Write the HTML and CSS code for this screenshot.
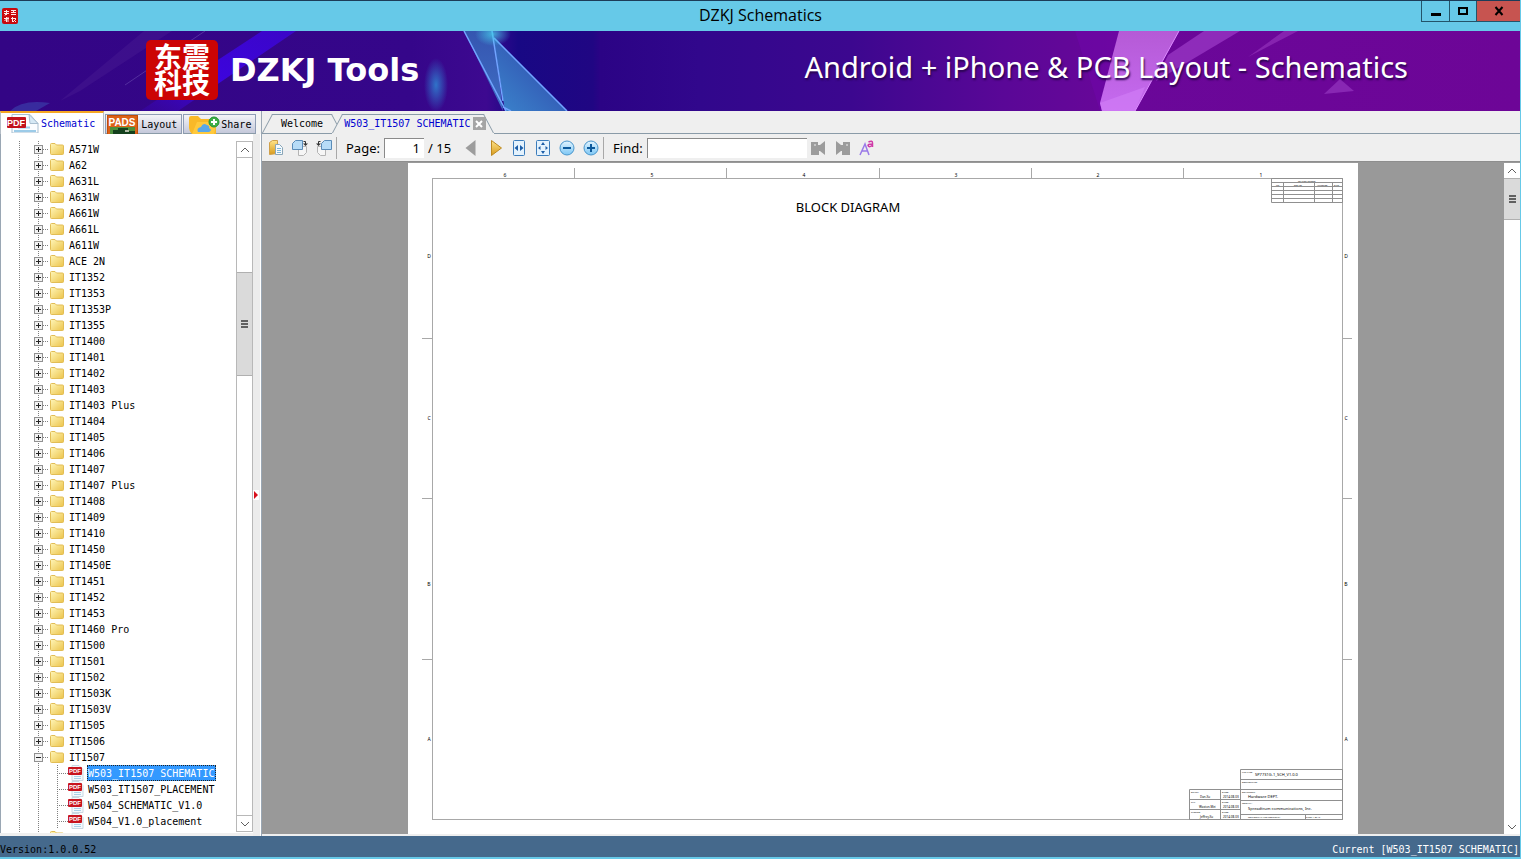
FILE: index.html
```
<!DOCTYPE html>
<html lang="en">
  <head>
    <meta charset="UTF-8" />
    <meta name="viewport" content="width=device-width, initial-scale=1.0" />
    <title>DZKJ Schematics</title>
    <link rel="stylesheet" href="styles.css">
  </head>
  <body>
    <!-- shared icons -->
    <svg class="sprite" width="0" height="0">
      <defs>
        <linearGradient id="gFolder" x1="0" y1="0" x2="1" y2="1">
          <stop offset="0" stop-color="#fff6b8" />
          <stop offset="1" stop-color="#ecc44c" />
        </linearGradient>
        <linearGradient id="gGold" x1="0" y1="0" x2="0" y2="1">
          <stop offset="0" stop-color="#ffe48a" />
          <stop offset="1" stop-color="#d79a1c" />
        </linearGradient>
        <linearGradient id="gBlue" x1="0" y1="0" x2="0" y2="1">
          <stop offset="0" stop-color="#e2f4ff" />
          <stop offset="1" stop-color="#7cc6f4" />
        </linearGradient>
      </defs>
      <symbol id="folder" viewBox="0 0 14 12">
        <path d="M.5 1.500Q.5.5 1.500.5h3.500l1.500 1.500h6q1 0 1 1v7.500q0 1-1 1h-11q-1 0-1-1z" fill="url(#gFolder)" stroke="#e2bd55" />
      </symbol>
      <symbol id="pdf" viewBox="0 0 16 16">
        <path d="M4 .5h7l4 4v11H4z" fill="#f4f9fd" stroke="#c9d8e2" />
        <path d="M6 11.500h7M6 13.500h7" stroke="#a9d2e8" />
        <rect x="0" y="2" width="14" height="8" rx="1" fill="#c8141e" />
        <text class="badge" x="7" y="8" font-size="6">PDF</text>
      </symbol>
    </svg>

    <header class="titlebar">
      <svg class="app-icon" viewBox="0 0 16 16">
        <rect width="16" height="16" rx="2" fill="#c80a0f" />
        <path d="M2 3.500h5M4.500 2v5M2 5.500h5M3 7.500l1-2M9 2.500h5M9 4.500h5M11.500 2v3M9 6.500h5M2 10.500h5M4.500 9v5M2.500 13l2-2M6 9v5M9 10.500h5M10.500 9v5M12 12l2 2M14 11l-3 3" stroke="#ffe9e9" fill="none" />
      </svg>
      <h1 class="window-title">DZKJ Schematics</h1>
      <div class="window-buttons">
        <button class="win-btn minimize" aria-label="Minimize">
          <svg width="12" height="12"><path d="M1 8h10v3H1z" /></svg>
        </button>
        <button class="win-btn maximize" aria-label="Maximize">
          <svg width="12" height="12"><path d="M2 3h8v6H2z" fill="none" stroke="#000" stroke-width="2" /></svg>
        </button>
        <button class="win-btn close" aria-label="Close">
          <svg width="12" height="12"><path d="M2.500 2l7 8M9.500 2l-7 8" stroke="#000" stroke-width="2" /></svg>
        </button>
      </div>
    </header>

    <section class="banner">
      <svg class="banner-art" viewBox="0 0 1520 80" preserveAspectRatio="none">
        <defs>
          <linearGradient id="gBanner">
            <stop offset="0" stop-color="#330585" />
            <stop offset=".27" stop-color="#35068a" />
            <stop offset=".32" stop-color="#3d0990" />
            <stop offset=".341" stop-color="#180884" />
            <stop offset=".39" stop-color="#200683" />
            <stop offset=".395" stop-color="#2b0385" />
            <stop offset=".46" stop-color="#31078c" />
            <stop offset=".56" stop-color="#3c078f" />
            <stop offset=".66" stop-color="#5a0797" />
            <stop offset=".74" stop-color="#6a0799" />
            <stop offset="1" stop-color="#6d0597" />
          </linearGradient>
          <linearGradient id="gBeam" x1="1" y1="0" x2="0" y2="1">
            <stop offset="0" stop-color="#3c06d2" />
            <stop offset=".6" stop-color="#3e04ee" />
            <stop offset="1" stop-color="#3c06c0" stop-opacity=".3" />
          </linearGradient>
          <linearGradient id="gShard" x1="0" y1="0" x2="0" y2="1">
            <stop offset="0" stop-color="#3555b0" />
            <stop offset="1" stop-color="#3f6fc4" />
          </linearGradient>
          <linearGradient id="gShard2" x1="1" y1="0" x2="0" y2="1">
            <stop offset="0" stop-color="#2e3fa6" />
            <stop offset="1" stop-color="#3b86cd" />
          </linearGradient>
          <linearGradient id="gPink" x1="0" y1="0" x2="0" y2="1">
            <stop offset="0" stop-color="#b55ad6" />
            <stop offset="1" stop-color="#c66bf0" />
          </linearGradient>
          <radialGradient id="gGlow">
            <stop offset="0" stop-color="#2f7fd0" stop-opacity=".9" />
            <stop offset="1" stop-color="#2f7fd0" stop-opacity="0" />
          </radialGradient>
          <radialGradient id="gSpark">
            <stop offset="0" stop-color="#45cbea" stop-opacity=".8" />
            <stop offset="1" stop-color="#45cbea" stop-opacity="0" />
          </radialGradient>
        </defs>
        <rect width="1520" height="80" fill="url(#gBanner)" />
        <path d="M144 0h28L80 60 60 70z" fill="#4a1f93" opacity=".4" />
        <path d="M205 0L125 54" stroke="#6a4bb0" opacity=".6" />
        <path d="M262 0h34L178 80h-38z" fill="url(#gBeam)" opacity=".85" />
        <path d="M10 80Q22 68 50 72L36 80z" fill="#4064c4" opacity=".4" />
        <ellipse cx="436" cy="54" rx="12" ry="27" fill="url(#gGlow)" />
        <path d="M464 0h29l10 80z" fill="url(#gShard)" />
        <path d="M493 5l74 75h-62z" fill="url(#gShard2)" />
        <path d="M464 0l42 80M492 0l11 70M494 7l73 73M503 76l8 4" fill="none" stroke="#71a4ff" stroke-width="1.500" />
        <ellipse cx="493" cy="3" rx="18" ry="12" fill="url(#gSpark)" />
        <path d="M1075 0h45v80h-20z" fill="#7206b0" opacity=".4" />
        <path d="M1119 0h60l-44 80h-33l-2-8z" fill="url(#gPink)" />
        <path d="M1100 72l45-16-10 24h-33z" fill="#d07cf5" opacity=".7" />
        <path d="M1179 0l-44 80" stroke="#dc8bff" />
        <path d="M1204 0h36l-84 50 12-26z" fill="#9432c0" opacity=".85" />
        <path d="M1284 0h14l-50 26z" fill="#8d2bb5" opacity=".8" />
        <path d="M1340 48l14 12-30 3z" fill="#8827b3" />
      </svg>
      <div class="brand">
        <p class="logo">东震<br />科技</p>
        <strong class="brand-name">DZKJ Tools</strong>
      </div>
      <p class="slogan">Android + iPhone &amp; PCB Layout - Schematics</p>
    </section>

    <main class="workspace">
      <aside class="sidebar">
        <nav class="side-tabs">
          <button class="side-tab active">
            <svg width="32" height="19" viewBox="0 0 32 19">
              <path d="M5 .5h18l8 9V19H5z" fill="#fbfdff" stroke="#a9bfd0" />
              <path d="M22 .5l1 9h8z" fill="#d6e9f5" stroke="#a9bfd0" />
              <path d="M11 13.500h12M7 17h22" stroke="#9ccbe8" stroke-width="2" />
              <rect x="0" y="3" width="19" height="11" rx="1" fill="#c3121c" />
              <text class="badge" x="9" y="12" font-size="9">PDF</text>
            </svg>
            Schematic
          </button>
          <button class="side-tab">
            <svg width="31" height="19" viewBox="0 0 31 19">
              <rect x=".5" y=".5" width="30" height="19" fill="#dc6118" stroke="#c14d08" />
              <path d="M3 12h25v7H3z" fill="#4d8f3b" />
              <path d="M6 19v-4h5v-2h10v3h7v3z" fill="#14401d" />
              <rect x="18" y="15" width="4" height="2" fill="#aebaa6" />
              <text class="badge" x="15" y="11" font-size="10">PADS</text>
            </svg>
            Layout
          </button>
          <button class="side-tab share">
            <svg width="32" height="19" viewBox="0 0 32 19">
              <path d="M1 3q0-2 2-2h7l3 3h13q2 0 2 2v13H4q-3-3-3-6z" fill="#f9b928" />
              <path d="M4 19L9 7h20l-3 12z" fill="#ffc93c" />
              <path d="M10 17q-2-4 3-5 2-5 6-2 3 1 2 3 4 2 0 4z" fill="#5aa7e8" />
              <circle cx="26" cy="7" r="5" fill="#3dae48" stroke="#249232" />
              <path d="M26 4v6M23 7h6" stroke="#fff" stroke-width="2" />
            </svg>
            Share
          </button>
        </nav>
        <div class="side-body">
          <div class="tree-pane">
            <ul class="tree">
              <li><button class="toggle" aria-label="Expand"></button><svg class="folder"><use href="#folder" /></svg>A571W</li>
              <li><button class="toggle" aria-label="Expand"></button><svg class="folder"><use href="#folder" /></svg>A62</li>
              <li><button class="toggle" aria-label="Expand"></button><svg class="folder"><use href="#folder" /></svg>A631L</li>
              <li><button class="toggle" aria-label="Expand"></button><svg class="folder"><use href="#folder" /></svg>A631W</li>
              <li><button class="toggle" aria-label="Expand"></button><svg class="folder"><use href="#folder" /></svg>A661W</li>
              <li><button class="toggle" aria-label="Expand"></button><svg class="folder"><use href="#folder" /></svg>A661L</li>
              <li><button class="toggle" aria-label="Expand"></button><svg class="folder"><use href="#folder" /></svg>A611W</li>
              <li><button class="toggle" aria-label="Expand"></button><svg class="folder"><use href="#folder" /></svg>ACE 2N</li>
              <li><button class="toggle" aria-label="Expand"></button><svg class="folder"><use href="#folder" /></svg>IT1352</li>
              <li><button class="toggle" aria-label="Expand"></button><svg class="folder"><use href="#folder" /></svg>IT1353</li>
              <li><button class="toggle" aria-label="Expand"></button><svg class="folder"><use href="#folder" /></svg>IT1353P</li>
              <li><button class="toggle" aria-label="Expand"></button><svg class="folder"><use href="#folder" /></svg>IT1355</li>
              <li><button class="toggle" aria-label="Expand"></button><svg class="folder"><use href="#folder" /></svg>IT1400</li>
              <li><button class="toggle" aria-label="Expand"></button><svg class="folder"><use href="#folder" /></svg>IT1401</li>
              <li><button class="toggle" aria-label="Expand"></button><svg class="folder"><use href="#folder" /></svg>IT1402</li>
              <li><button class="toggle" aria-label="Expand"></button><svg class="folder"><use href="#folder" /></svg>IT1403</li>
              <li><button class="toggle" aria-label="Expand"></button><svg class="folder"><use href="#folder" /></svg>IT1403 Plus</li>
              <li><button class="toggle" aria-label="Expand"></button><svg class="folder"><use href="#folder" /></svg>IT1404</li>
              <li><button class="toggle" aria-label="Expand"></button><svg class="folder"><use href="#folder" /></svg>IT1405</li>
              <li><button class="toggle" aria-label="Expand"></button><svg class="folder"><use href="#folder" /></svg>IT1406</li>
              <li><button class="toggle" aria-label="Expand"></button><svg class="folder"><use href="#folder" /></svg>IT1407</li>
              <li><button class="toggle" aria-label="Expand"></button><svg class="folder"><use href="#folder" /></svg>IT1407 Plus</li>
              <li><button class="toggle" aria-label="Expand"></button><svg class="folder"><use href="#folder" /></svg>IT1408</li>
              <li><button class="toggle" aria-label="Expand"></button><svg class="folder"><use href="#folder" /></svg>IT1409</li>
              <li><button class="toggle" aria-label="Expand"></button><svg class="folder"><use href="#folder" /></svg>IT1410</li>
              <li><button class="toggle" aria-label="Expand"></button><svg class="folder"><use href="#folder" /></svg>IT1450</li>
              <li><button class="toggle" aria-label="Expand"></button><svg class="folder"><use href="#folder" /></svg>IT1450E</li>
              <li><button class="toggle" aria-label="Expand"></button><svg class="folder"><use href="#folder" /></svg>IT1451</li>
              <li><button class="toggle" aria-label="Expand"></button><svg class="folder"><use href="#folder" /></svg>IT1452</li>
              <li><button class="toggle" aria-label="Expand"></button><svg class="folder"><use href="#folder" /></svg>IT1453</li>
              <li><button class="toggle" aria-label="Expand"></button><svg class="folder"><use href="#folder" /></svg>IT1460 Pro</li>
              <li><button class="toggle" aria-label="Expand"></button><svg class="folder"><use href="#folder" /></svg>IT1500</li>
              <li><button class="toggle" aria-label="Expand"></button><svg class="folder"><use href="#folder" /></svg>IT1501</li>
              <li><button class="toggle" aria-label="Expand"></button><svg class="folder"><use href="#folder" /></svg>IT1502</li>
              <li><button class="toggle" aria-label="Expand"></button><svg class="folder"><use href="#folder" /></svg>IT1503K</li>
              <li><button class="toggle" aria-label="Expand"></button><svg class="folder"><use href="#folder" /></svg>IT1503V</li>
              <li><button class="toggle" aria-label="Expand"></button><svg class="folder"><use href="#folder" /></svg>IT1505</li>
              <li><button class="toggle" aria-label="Expand"></button><svg class="folder"><use href="#folder" /></svg>IT1506</li>
              <li><button class="toggle open" aria-label="Collapse"></button><svg class="folder"><use href="#folder" /></svg>IT1507</li>
              <li class="file"><svg class="pdf"><use href="#pdf" /></svg><span class="selected">W503_IT1507 SCHEMATIC</span></li>
              <li class="file"><svg class="pdf"><use href="#pdf" /></svg><span>W503_IT1507_PLACEMENT</span></li>
              <li class="file"><svg class="pdf"><use href="#pdf" /></svg><span>W504_SCHEMATIC_V1.0</span></li>
              <li class="file"><svg class="pdf"><use href="#pdf" /></svg><span>W504_V1.0_placement</span></li>
              <li><button class="toggle" aria-label="Expand"></button><svg class="folder"><use href="#folder" /></svg></li>
            </ul>
            <div class="scrollbar side-scroll">
              <button class="scroll-btn" aria-label="Scroll up"><svg width="10" height="6"><path d="M1 5l4-4 4 4" /></svg></button>
              <div class="gap-before"></div>
              <div class="thumb"><i></i></div>
              <div class="gap-after"></div>
              <button class="scroll-btn" aria-label="Scroll down"><svg width="10" height="6"><path d="M1 1l4 4 4-4" /></svg></button>
            </div>
          </div>
          <div class="splitter">
            <svg width="6" height="10"><path d="M0 0h6v10H0z" fill="#fff" /><path d="M1 1l4 4-4 4z" fill="#d8101c" /></svg>
          </div>
        </div>
      </aside>

      <section class="viewer">
        <nav class="doc-tabs">
          <div class="doc-tab"><button class="doc-name">Welcome</button></div>
          <div class="doc-tab active">
            <button class="doc-name">W503_IT1507 SCHEMATIC</button>
            <button class="doc-close" aria-label="Close tab"><svg width="8" height="8"><path d="M1 1l6 6M7 1L1 7" stroke="#fff" stroke-width="2" /></svg></button>
          </div>
          <div class="doc-rest"></div>
        </nav>

        <div class="toolbar">
          <button class="tool" aria-label="Open">
            <svg width="16" height="16">
              <path d="M1.500 2.500l3-2h5v13l-8 1z" fill="url(#gGold)" stroke="#d0a04a" />
              <path d="M7.500 4.500h4l3 3v7h-7z" fill="#f7fafc" stroke="#8aa6b8" />
              <path d="M9 8.500h4M9 10.500h4M9 12.500h4" stroke="#7cb6d8" />
            </svg>
          </button>
          <button class="tool" aria-label="Rotate left">
            <svg width="16" height="16">
              <path d="M6.500 6.500h8v6l-3 3h-5z" fill="#f6f6f6" stroke="#b4b4b4" />
              <path d="M3.500.5h7v9H.5v-6z" fill="#b7dcf7" stroke="#5b8cb8" />
              <path d="M11.500 1.500h2V4" fill="none" stroke="#333" />
              <path d="M11 3.500h5L13.500 6z" fill="#333" />
            </svg>
          </button>
          <button class="tool" aria-label="Rotate right">
            <svg width="16" height="16">
              <path d="M1.500 6.500h8v9h-5l-3-3z" fill="#f6f6f6" stroke="#b4b4b4" />
              <path d="M8.500.5h7v9h-10v-6z" fill="#b7dcf7" stroke="#5b8cb8" />
              <path d="M4.500 1.500h-2V4" fill="none" stroke="#333" />
              <path d="M0 3.500h5L2.500 6z" fill="#333" />
            </svg>
          </button>
          <div class="separator"></div>
          <label for="page">Page:</label>
          <input id="page" class="page-input" type="text" value="1" />
          <span class="page-total">/ 15</span>
          <button class="tool" aria-label="Previous page">
            <svg width="16" height="16"><path d="M12.500 0v16L2.500 8z" fill="#9c9c9c" /></svg>
          </button>
          <button class="tool" aria-label="Next page">
            <svg width="16" height="16"><path d="M4.500.5v15l10-7.500z" fill="url(#gGold)" stroke="#bd8a22" /></svg>
          </button>
          <button class="tool" aria-label="Fit width">
            <svg width="16" height="16">
              <rect x="2.500" y=".5" width="11" height="15" rx="1" fill="#e4f2fd" stroke="#3b7cbb" />
              <path d="M7 5v6L3.500 8zM9 5v6l3.500-3z" fill="#1d5ea8" />
            </svg>
          </button>
          <button class="tool" aria-label="Fit page">
            <svg width="16" height="16">
              <rect x="1.500" y=".5" width="13" height="15" rx="1" fill="#e4f2fd" stroke="#3b7cbb" />
              <path d="M6 5h4L8 2zM6 11h4l-2 3zM5.500 6v4L3 8zM10.500 6v4L13 8z" fill="#1d5ea8" />
            </svg>
          </button>
          <button class="tool" aria-label="Zoom out">
            <svg width="16" height="16">
              <circle cx="8" cy="8" r="7" fill="url(#gBlue)" stroke="#4a96cc" />
              <path d="M4 8h8" stroke="#0d5a9c" stroke-width="2" />
            </svg>
          </button>
          <button class="tool" aria-label="Zoom in">
            <svg width="16" height="16">
              <circle cx="8" cy="8" r="7" fill="url(#gBlue)" stroke="#4a96cc" />
              <path d="M4 8h8M8 4v8" stroke="#0d5a9c" stroke-width="2" />
            </svg>
          </button>
          <div class="separator"></div>
          <label for="find">Find:</label>
          <input id="find" class="find-input" type="text" />
          <button class="tool" aria-label="Find previous">
            <svg width="16" height="16"><path d="M0 2h7v3h2l5-4v14l-5-4H8v4H0z" fill="#9c9c9c" /><path d="M4 4v2" stroke="#eee" /></svg>
          </button>
          <button class="tool" aria-label="Find next">
            <svg width="16" height="16"><path d="M15 2H8v3H6L1 1v14l5-4h1v4h8z" fill="#9c9c9c" /><path d="M12 4v2" stroke="#eee" /></svg>
          </button>
          <button class="tool" aria-label="Match case">
            <svg width="16" height="16">
              <path d="M1 15L6 4l4 11M3 11h6" fill="none" stroke="#9a7ae8" stroke-width="1.500" />
              <path d="M9.500 2q4-2 4 1v4M13 4q-4 0-4 1.500 1 2.500 4 0" fill="none" stroke="#d03aa8" stroke-width="1.500" />
            </svg>
          </button>
        </div>

        <div class="canvas">
          <svg class="sheet" viewBox="0 0 950 671" preserveAspectRatio="xMidYMin meet">
            <rect width="950" height="671" fill="#fff" />
            <g class="lines">
              <rect x="24.500" y="15.500" width="910" height="641" />
              <path d="M166.500 5v10M318.500 5v10M471.500 5v10M623.500 5v10M775.500 5v10" />
              <path d="M14 175.500h10M14 335.500h10M14 496.500h10M935 175.500h9M935 335.500h9M935 496.500h9" />
            </g>
            <g class="dark-lines">
              <path d="M863.500 15.500h71v24h-71zM863.500 19.500h71M863.500 23.500h71M863.500 27.500h71M863.500 31.500h71M863.500 35.500h71M875.500 19.500v20M906.500 19.500v20M924.500 19.500v20" />
              <path d="M832.500 606.500h102v50h-102zM832.500 616.500h102M832.500 626.500h102M832.500 637.500h102M832.500 651.500h102M897.500 651.500v5" />
              <path d="M832.500 626.500h-51v30h51M781.500 636.500h51M781.500 646.500h51M812.500 626.500v30" />
            </g>
            <g class="marks">
              <text x="97" y="14">6</text>
              <text x="244" y="14">5</text>
              <text x="396" y="14">4</text>
              <text x="548" y="14">3</text>
              <text x="690" y="14">2</text>
              <text x="853" y="14">1</text>
              <text x="21" y="95">D</text>
              <text x="21" y="257">C</text>
              <text x="21" y="423">B</text>
              <text x="21" y="578">A</text>
              <text x="938" y="95">D</text>
              <text x="938" y="257">C</text>
              <text x="938" y="423">B</text>
              <text x="938" y="578">A</text>
            </g>
            <text class="sheet-title" x="440" y="49">BLOCK DIAGRAM</text>
            <g class="tiny">
              <text x="890" y="19">REVISION RECORD</text>
              <text x="868" y="23">LTR</text>
              <text x="886" y="23">ECO NO:</text>
              <text x="909" y="23">APPROVED:</text>
              <text x="926" y="23">DATE:</text>
              <text x="834" y="610">FILE NAME:</text>
              <text x="834" y="620">DOCUMENT NO:</text>
              <text x="834" y="630">DEPARTMENT:</text>
              <text x="834" y="641">COMPANY:</text>
              <text x="840" y="655">CONFIDENTIAL AND PROPRIETARY</text>
              <text x="898" y="655">SHEET: 1 OF 15</text>
              <text x="783" y="630">DRAWN:</text>
              <text x="783" y="640">CHK:</text>
              <text x="783" y="650">CHECKED:</text>
              <text x="814" y="630">DATED:</text>
              <text x="814" y="640">DATED:</text>
              <text x="814" y="650">DATED:</text>
            </g>
            <g class="small">
              <text x="847" y="613">SP7731G-1_SCH_V1.0.0</text>
              <text x="840" y="635">Hardware DEPT.</text>
              <text x="840" y="647">Spreadtrum communications, Inc.</text>
            </g>
            <g class="signed">
              <text x="792" y="635">Dan.Xu</text>
              <text x="791" y="645">Waston.Mei</text>
              <text x="792" y="655">Jeffrey.Xu</text>
              <text x="815" y="635">2014-08-03</text>
              <text x="815" y="645">2014-08-03</text>
              <text x="815" y="655">2014-08-03</text>
            </g>
          </svg>
          <div class="scrollbar page-scroll">
            <button class="scroll-btn" aria-label="Scroll up"><svg width="10" height="6"><path d="M1 5l4-4 4 4" /></svg></button>
            <div class="thumb"><i></i></div>
            <div class="gap-after"></div>
            <button class="scroll-btn" aria-label="Scroll down"><svg width="10" height="6"><path d="M1 1l4 4 4-4" /></svg></button>
          </div>
        </div>
      </section>
    </main>

    <footer class="statusbar">
      <span>Version:1.0.0.52</span>
      <span class="current">Current [W503_IT1507 SCHEMATIC]</span>
    </footer>
  </body>
</html>
```
FILE: styles.css
```
* {
  margin: 0;
  padding: 0;
  box-sizing: border-box;
}

body {
  display: flex;
  flex-direction: column;
  height: 100vh;
  overflow: hidden;
  background: #efefef;
  border-right: 1px solid #66c9e8;
  font-family: "DejaVu Sans Mono", monospace;
  font-size: 10px;
  color: #000;
}

button {
  border: none;
  background: none;
  font: inherit;
  color: inherit;
}

svg {
  flex: none;
}

.sprite {
  position: absolute;
}

.badge {
  fill: #fff;
  font-family: "Liberation Sans", sans-serif;
  font-weight: bold;
  text-anchor: middle;
}

/* title bar */
.titlebar {
  display: grid;
  grid-template-columns: 1fr auto 1fr;
  align-items: center;
  height: 31px;
  margin-right: -1px;
  background: #66c9e8;
  border-top: 1px solid #1c3c58;
}

.app-icon {
  width: 16px;
  height: 16px;
  margin-left: 2px;
}

.window-title {
  padding-bottom: 2px;
  font-family: "Open Sans", sans-serif;
  font-size: 16px;
  font-weight: normal;
}

.window-buttons {
  display: flex;
  align-self: start;
  justify-self: end;
  height: 21px;
  border: 1px solid #23546a;
  border-width: 0 0 1px 1px;
}

.win-btn {
  display: flex;
  align-items: center;
  justify-content: center;
  width: 27px;
}

.win-btn.maximize {
  border-left: 1px solid #23546a;
}

.win-btn.close {
  width: 45px;
  background: #c75450;
  border-left: 1px solid #23546a;
}

/* banner */
.banner {
  position: relative;
  display: flex;
  align-items: center;
  justify-content: space-between;
  height: 80px;
  padding: 0 112px 2px 146px;
  color: #fff;
  font-family: "Noto Sans", sans-serif;
}

.banner-art {
  position: absolute;
  left: 0;
  top: 0;
  width: 100%;
  height: 100%;
}

.brand {
  position: relative;
  display: flex;
  align-items: center;
  gap: 12px;
}

.logo {
  width: 72px;
  height: 60px;
  padding: 3px 0;
  border-radius: 5px;
  background: #cc0404;
  font: bold 28px/26px "Noto Sans CJK SC", sans-serif;
  text-align: center;
}

.brand-name {
  font-family: "DejaVu Sans", sans-serif;
  font-size: 32px;
  line-height: 40px;
}

.slogan {
  position: relative;
  padding-bottom: 6px;
  font-size: 29px;
  line-height: 34px;
  text-shadow: 1px 2px 2px #2a0550;
}

/* workspace */
.workspace {
  flex: 1;
  display: flex;
  min-height: 0;
}

.sidebar {
  display: flex;
  flex-direction: column;
  width: 261px;
}

.side-tabs {
  display: flex;
  align-items: flex-end;
  height: 23px;
  background: #f3f3f3;
}

.side-tab {
  display: flex;
  align-items: center;
  gap: 3px;
  height: 20px;
  margin-left: 1px;
  padding: 0 4px 0 1px;
  background: linear-gradient(#f4f4f8, #c4c8da);
  border: 1px solid #8f9db5;
  border-bottom-color: #8a9ba8;
}

.side-tab.active {
  gap: 2px;
  height: 23px;
  margin-left: 0;
  padding: 0 8px 0 6px;
  background: #fff;
  border: 1px solid #b5bdc6;
  border-width: 2px 1px 0 1px;
  border-top-color: #f5a623;
  color: #0000d0;
}

.side-tab.share {
  gap: 1px;
  padding-left: 4px;
}

.side-body {
  flex: 1;
  display: flex;
  min-height: 0;
}

.tree-pane {
  flex: 1;
  display: flex;
  min-width: 0;
  margin-bottom: 3px;
  padding-top: 7px;
  background: #fff;
  border-left: 1px solid #9aa7b4;
}

.tree {
  flex: 1;
  overflow: hidden;
  padding-left: 33px;
  list-style: none;
  /* dotted guides of the two upper levels */
  background:
    repeating-linear-gradient(#808080 0 1px, transparent 1px 2px) 18px 0 / 1px 100% no-repeat,
    repeating-linear-gradient(#808080 0 1px, transparent 1px 2px) 37px 0 / 1px 100% no-repeat;
}

.tree li {
  display: flex;
  align-items: center;
  height: 16px;
  white-space: nowrap;
}

.toggle {
  width: 9px;
  height: 9px;
  border: 1px solid #919191;
  background:
    linear-gradient(#222, #222) center / 5px 1px no-repeat,
    linear-gradient(#222, #222) center / 1px 5px no-repeat,
    #f2f2f2;
}

.toggle.open {
  background: linear-gradient(#222, #222) center / 5px 1px no-repeat, #f2f2f2;
}

.folder {
  width: 21px;
  height: 12px;
  margin-right: 5px;
  padding-left: 7px;
  background: repeating-linear-gradient(90deg, #808080 0 1px, transparent 1px 2px) 0 6px / 6px 1px no-repeat;
}

.tree .file {
  margin-left: 23px;
  background:
    repeating-linear-gradient(#808080 0 1px, transparent 1px 2px) 0 0 / 1px 100% no-repeat,
    repeating-linear-gradient(90deg, #808080 0 1px, transparent 1px 2px) 0 8px / 11px 1px no-repeat;
}

.pdf {
  width: 16px;
  height: 16px;
  margin: 0 3px 0 11px;
}

.file span {
  height: 16px;
  padding-right: 1px;
  border: 1px solid transparent;
  line-height: 16px;
}

.file .selected {
  background: #3399ff;
  border: 1px dotted #222;
  color: #fff;
}

/* scrollbars */
.scrollbar {
  display: flex;
  flex-direction: column;
  background: #fff;
}

.side-scroll {
  width: 17px;
  margin-bottom: 1px;
  border: 1px solid #b8b8b8;
}

.page-scroll {
  width: 16px;
}

.scroll-btn {
  display: flex;
  align-items: center;
  justify-content: center;
  height: 16px;
}

.page-scroll .scroll-btn {
  height: 15px;
}

.side-scroll .scroll-btn:first-child {
  border-bottom: 1px solid #b8b8b8;
}

.side-scroll .scroll-btn:last-child {
  border-top: 1px solid #b8b8b8;
}

.scroll-btn path {
  fill: none;
  stroke: #606060;
}

.thumb {
  display: flex;
  align-items: center;
  justify-content: center;
  background: #dadada;
  border: 1px solid #b0b0b0;
  border-width: 1px 0;
}

.thumb i {
  width: 7px;
  height: 8px;
  background: repeating-linear-gradient(#606060 0 2px, transparent 2px 3px);
}

.side-scroll .gap-before {
  flex: 114;
}

.side-scroll .thumb {
  flex: 102;
}

.side-scroll .gap-after {
  flex: 440;
}

.page-scroll .thumb {
  flex: 40;
}

.page-scroll .gap-after {
  flex: 599;
}

.splitter {
  display: flex;
  align-items: center;
  width: 8px;
  padding-top: 20px;
  background: #ececec;
  border-right: 1px solid #fff;
}

/* document tabs */
.viewer {
  flex: 1;
  display: flex;
  flex-direction: column;
  min-width: 0;
  border-left: 1px solid #9aa7b4;
}

.doc-tabs {
  display: flex;
  align-items: flex-end;
  height: 23px;
}

.doc-tab {
  position: relative;
  isolation: isolate;
  display: flex;
  align-items: center;
  height: 20px;
  padding: 0 19px;
  border-bottom: 1px solid #8a9ba8;
}

.doc-tab::before,
.doc-tab::after {
  content: "";
  position: absolute;
  z-index: -1;
  top: 0;
  bottom: 0;
  width: 50%;
  background: #efefef;
  border-top: 1px solid #8a9ba8;
}

.doc-tab::before {
  left: 0;
  border-left: 1px solid #8a9ba8;
  transform: skewX(-28deg);
  transform-origin: left bottom;
}

.doc-tab::after {
  right: 0;
  border-right: 1px solid #8a9ba8;
  transform: skewX(28deg);
  transform-origin: right bottom;
}

.doc-tab.active {
  gap: 2px;
  margin-left: -10px;
  padding: 0 8px 0 12px;
  border-bottom-color: #efefef;
  color: #0000d0;
}

.doc-close {
  display: flex;
  align-items: center;
  justify-content: center;
  width: 13px;
  height: 13px;
  background: #a5a5a5;
}

.doc-rest {
  flex: 1;
  border-bottom: 1px solid #8a9ba8;
}

/* toolbar */
.toolbar {
  display: flex;
  align-items: center;
  height: 28px;
  padding-left: 2px;
  border-bottom: 1px solid #8e8e8e;
  background: #efefef;
  font-family: "Noto Sans", sans-serif;
  font-size: 13px;
}

.tool {
  display: flex;
  align-items: center;
  justify-content: center;
  width: 24px;
  height: 24px;
}

.separator {
  width: 1px;
  height: 22px;
  background: #a8a8a8;
}

.toolbar label {
  margin: 0 4px 0 9px;
}

.toolbar input {
  height: 20px;
  border: 1px solid #8a8a8a;
  border-width: 1px 0 0 1px;
  background: #fff;
  font: inherit;
}

.page-input {
  width: 40px;
  padding-right: 4px;
  text-align: right;
}

.page-total {
  margin: 0 8px 0 4px;
}

.find-input {
  width: 160px;
}

/* drawing */
.canvas {
  flex: 1;
  display: flex;
  min-height: 0;
  margin-bottom: 2px;
  padding-top: 1px;
  background: #999;
}

.sheet {
  flex: 1;
  min-width: 0;
  height: 100%;
  font-family: "Noto Sans", sans-serif;
}

.lines {
  fill: none;
  stroke: #a8a8a8;
}

.dark-lines {
  fill: none;
  stroke: #909090;
}

.marks {
  font-size: 5px;
  text-anchor: middle;
}

.sheet-title {
  font-size: 13px;
  text-anchor: middle;
}

.tiny {
  font-size: 2px;
}

.small {
  font-size: 4px;
}

.signed {
  font-size: 3px;
}

/* status bar */
.statusbar {
  display: flex;
  align-items: flex-end;
  justify-content: space-between;
  height: 23px;
  padding: 0 1px 2px 0;
  background: #45698c;
  border-bottom: 2px solid #66c9e8;
}

.current {
  color: #fff;
}
```
